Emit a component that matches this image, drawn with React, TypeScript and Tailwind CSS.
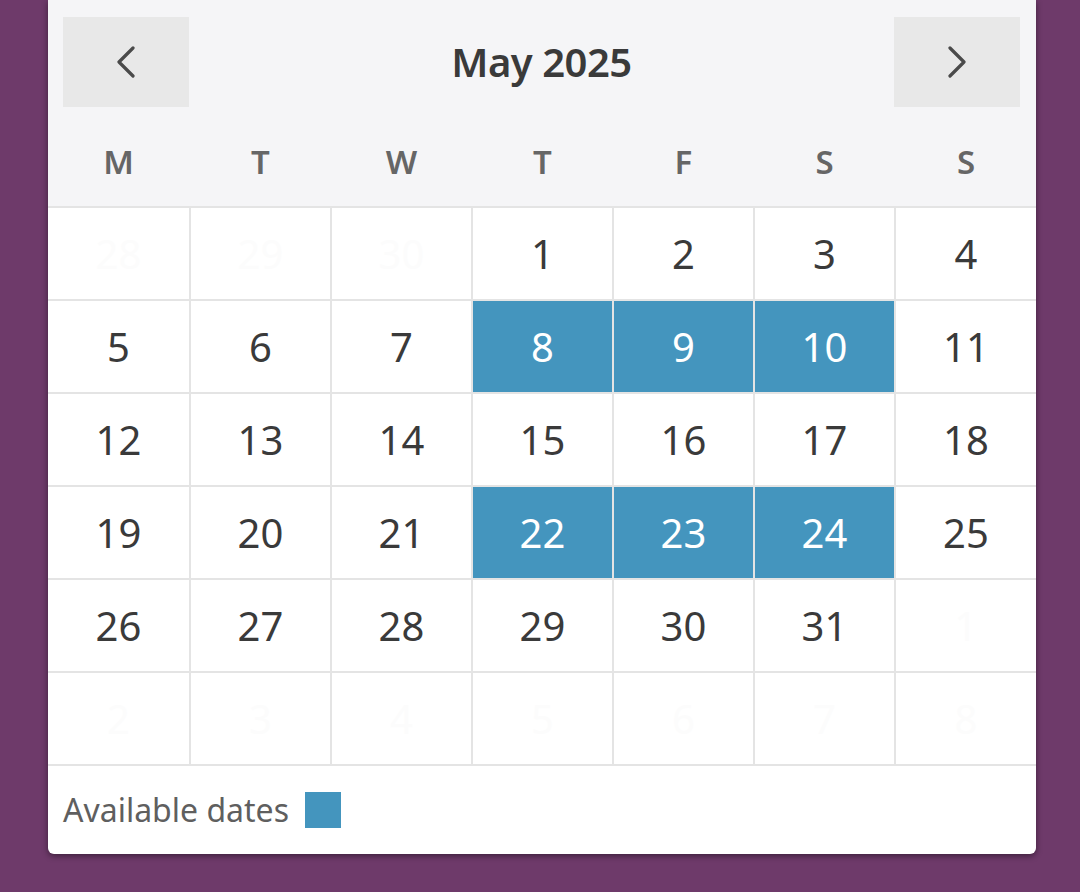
import React from "react";

type Cell = { d: number; other?: boolean; hl?: boolean };

const rows: Cell[][] = [
  [{ d: 28, other: true }, { d: 29, other: true }, { d: 30, other: true }, { d: 1 }, { d: 2 }, { d: 3 }, { d: 4 }],
  [{ d: 5 }, { d: 6 }, { d: 7 }, { d: 8, hl: true }, { d: 9, hl: true }, { d: 10, hl: true }, { d: 11 }],
  [{ d: 12 }, { d: 13 }, { d: 14 }, { d: 15 }, { d: 16 }, { d: 17 }, { d: 18 }],
  [{ d: 19 }, { d: 20 }, { d: 21 }, { d: 22, hl: true }, { d: 23, hl: true }, { d: 24, hl: true }, { d: 25 }],
  [{ d: 26 }, { d: 27 }, { d: 28 }, { d: 29 }, { d: 30 }, { d: 31 }, { d: 1, other: true }],
  [{ d: 2, other: true }, { d: 3, other: true }, { d: 4, other: true }, { d: 5, other: true }, { d: 6, other: true }, { d: 7, other: true }, { d: 8, other: true }],
];

const days = ["M", "T", "W", "T", "F", "S", "S"];

function Chevron({ dir }: { dir: "l" | "r" }) {
  return (
    <svg width="22" height="32" viewBox="0 0 22 32" fill="none">
      <polyline
        points={dir === "l" ? "18,2 4,16 18,30" : "4,2 18,16 4,30"}
        stroke="#4a4a4a"
        strokeWidth="3.2"
        strokeLinecap="round"
        strokeLinejoin="round"
      />
    </svg>
  );
}

export default function App() {
  return (
    <div className="w-[1080px] h-[892px] bg-[#6e3a6a] overflow-hidden" style={{ fontFamily: "'Noto Sans', 'Open Sans', sans-serif" }}>
      <div className="ml-[48px] w-[988px] bg-white rounded-b-[6px] shadow-[0_2px_6px_rgba(0,0,0,0.45)] overflow-hidden">
        <div className="bg-[#f5f5f7]">
          <div className="flex items-center justify-between pt-[17px] pl-[15px] pr-[16px]">
            <div className="w-[126px] h-[90px] bg-[#e8e8e8] flex items-center justify-center">
              <Chevron dir="l" />
            </div>
            <div className="text-[40px] font-semibold text-[#3a3a3a] tracking-[-0.5px]">May 2025</div>
            <div className="w-[126px] h-[90px] bg-[#e8e8e8] flex items-center justify-center">
              <Chevron dir="r" />
            </div>
          </div>
          <div className="grid grid-cols-[141px_repeat(5,139px)_1fr] gap-x-[2px] h-[99px] items-center">
            {days.map((d, i) => (
              <div key={i} className="text-center text-[33px] font-semibold text-[#666] leading-none pt-[10px]">
                {d}
              </div>
            ))}
          </div>
        </div>
        <div className="grid grid-cols-[141px_repeat(5,139px)_1fr] gap-[2px] bg-[#e4e4e4] border-y-2 border-[#e4e4e4]">
          {rows.flat().map((c, i) => (
            <div
              key={i}
              className={
                "h-[91px] flex items-center justify-center text-[40px] " +
                (c.hl ? "bg-[#4495be] text-white" : "bg-white " + (c.other ? "text-[#fcfcfc]" : "text-[#3a3a3a]"))
              }
            >
              {c.d}
            </div>
          ))}
        </div>
        <div className="h-[88px] flex items-center pl-[15px] gap-[16px]">
          <span className="text-[32px] text-[#5f5f5f]">Available dates</span>
          <span className="w-[36px] h-[36px] bg-[#4495be]" />
        </div>
      </div>
    </div>
  );
}
